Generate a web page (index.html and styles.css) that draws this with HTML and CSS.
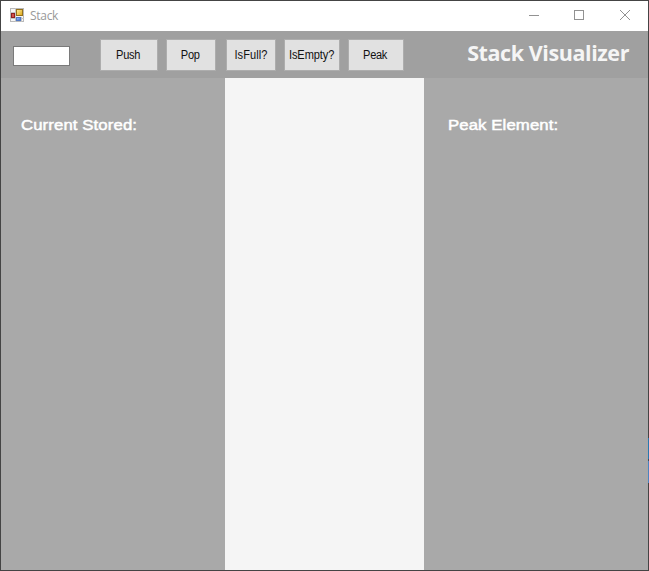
FILE: index.html
```html
<!DOCTYPE html>
<html lang="en">
<head>
<meta charset="utf-8">
<title>Stack</title>
<link rel="stylesheet" href="styles.css">
</head>
<body>
<div class="window">
  <header class="titlebar">
    <svg class="app-icon" width="14" height="14" viewBox="0 0 14 14" shape-rendering="crispEdges">
      <defs>
        <linearGradient id="gold" x1="0" y1="0" x2="1" y2="1"><stop offset="0" stop-color="#fff0a0"/><stop offset="1" stop-color="#dda413"/></linearGradient>
        <linearGradient id="blue" x1="0" y1="0" x2="1" y2="1"><stop offset="0" stop-color="#a9c8fa"/><stop offset="1" stop-color="#3a69cf"/></linearGradient>
      </defs>
      <rect x=".5" y=".5" width="13" height="13" fill="#f6f6f6" stroke="#b9b9b9"/>
      <path d="M5.500 0v14M0 4.500h6M0 10.500h14M11.500 9v5" stroke="#c4c4c4" fill="none"/>
      <rect x="6.500" y="1.500" width="6" height="6" fill="url(#gold)" stroke="#96721b"/>
      <rect x="1.500" y="5.500" width="3" height="4" fill="#d3504b" stroke="#8e2020"/>
      <rect x="6.500" y="9.500" width="4" height="3" fill="url(#blue)" stroke="#5279c4"/>
    </svg>
    <span class="caption">Stack</span>
    <svg class="controls" width="102" height="10" viewBox="0 0 102 10" fill="none" stroke="#929292">
      <path d="M0 5.500h10"/>
      <rect x="45.500" y=".5" width="9" height="9"/>
      <path d="M91 0l10 10M101 0l-10 10"/>
    </svg>
  </header>
  <div class="toolbar">
    <input class="value" type="text" aria-label="Value">
    <div class="buttons">
      <button class="btn push"><span>Push</span></button>
      <button class="btn pop"><span>Pop</span></button>
      <button class="btn full"><span>IsFull?</span></button>
      <button class="btn empty"><span>IsEmpty?</span></button>
      <button class="btn peak"><span>Peak</span></button>
    </div>
    <h1 class="title">Stack Visualizer</h1>
  </div>
  <main class="content">
    <section class="panel left"><h2 class="stored">Current Stored:</h2></section>
    <section class="stack"></section>
    <section class="panel right"><h2 class="element">Peak Element:</h2></section>
  </main>
  <div class="edge"></div>
</div>
</body>
</html>
```

FILE: styles.css
```css
* { box-sizing: border-box; }
body { margin: 0; }
.window {
  position: relative;
  display: flex;
  flex-direction: column;
  width: 649px;
  height: 571px;
  border: 1px solid #444;
  background: #a9a9a9;
  font-family: "Liberation Sans", Arial, sans-serif;
}
.titlebar {
  display: flex;
  height: 30px;
  padding: 0 17px 0 9px;
  background: #fff;
}
.app-icon { margin-top: 7px; }
.caption {
  margin-left: 6px;
  color: #999;
  font: 12px/30px "Open Sans", "Noto Sans", sans-serif;
  letter-spacing: -.3px;
}
.controls { margin: 9px 0 0 auto; }
.toolbar {
  display: flex;
  height: 47px;
  padding-left: 12px;
  background: #a0a0a0;
}
.value {
  width: 57px;
  height: 20px;
  margin: 15px 30px 0 0;
  padding: 0 3px;
  border: 1px solid #7a7a7a;
  border-radius: 0;
  background: #fff;
}
.buttons { display: flex; margin-top: 8px; height: 32px; }
.btn {
  display: flex;
  align-items: center;
  justify-content: center;
  height: 32px;
  padding: 0;
  border: 1px solid #adadad;
  background: #e1e1e1;
  color: #111;
  font: 12px/14px "Liberation Sans", Arial, sans-serif;
  letter-spacing: -.3px;
  white-space: nowrap;
}
.btn span { transform: scaleX(.92); }
.push { width: 58px; margin-right: 8px; padding-right: 2px; }
.pop { width: 50px; margin-right: 10px; padding-right: 2px; }
.full { width: 50px; margin-right: 8px; letter-spacing: .1px; }
.empty { width: 56px; margin-right: 8px; letter-spacing: -.1px; }
.peak { width: 56px; padding-right: 2px; }
.title {
  margin: 7px 19px 0 auto;
  color: #f5f5f5;
  font: bold 21.5px/30px "Open Sans", "Noto Sans", sans-serif;
  letter-spacing: -.42px;
  white-space: nowrap;
}
.content {
  display: grid;
  grid-template-columns: 224px 199px 224px;
  flex: 1;
}
.stack { background: #f5f5f5; }
.panel h2 {
  margin: 37px 0 0;
  color: #fff;
  font: 15.5px/20px "Liberation Sans", Arial, sans-serif;
  letter-spacing: .1px;
  -webkit-text-stroke: .5px #fff;
  transform: scaleX(1.08);
  transform-origin: left;
  white-space: nowrap;
}
.left { padding-left: 20px; }
.right { padding-left: 24px; }
.edge {
  position: absolute;
  right: -1px;
  top: 437px;
  width: 1px;
  height: 45px;
  background: linear-gradient(#2878b0 0 21px, #3a4d60 21px 23px, #4b83c0 23px);
}
```
